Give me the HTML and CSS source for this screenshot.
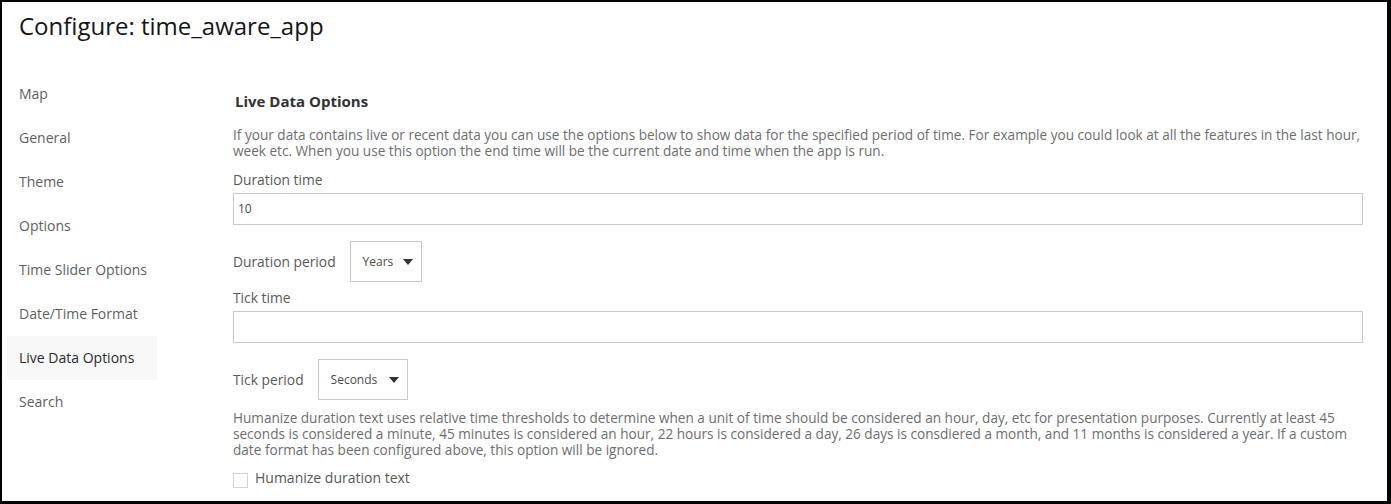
FILE: index.html
```html
<!DOCTYPE html>
<html>
<head>
<meta charset="utf-8">
<link rel="stylesheet" href="styles.css">
</head>
<body>
<div class="frame">
  <header class="header">
    <h1 class="title">Configure: time_aware_app</h1>
  </header>
  <div class="main">
    <nav class="sidebar">
      <div class="nav-item">Map</div>
      <div class="nav-item">General</div>
      <div class="nav-item">Theme</div>
      <div class="nav-item">Options</div>
      <div class="nav-item">Time Slider Options</div>
      <div class="nav-item">Date/Time Format</div>
      <div class="nav-item active">Live Data Options</div>
      <div class="nav-item">Search</div>
    </nav>
    <section class="content">
      <h2 class="section-title">Live Data Options</h2>
      <p class="desc">If your data contains live or recent data you can use the options below to show data for the specified period of time. For example you could look at all the features in the last hour, week etc. When you use this option the end time will be the current date and time when the app is run.</p>
      <div class="label label-top">Duration time</div>
      <div class="input">10</div>
      <div class="row row-duration">
        <span class="label">Duration period</span>
        <div class="select select-years"><span>Years</span><span class="caret"></span></div>
      </div>
      <div class="label label-tick">Tick time</div>
      <div class="input"></div>
      <div class="row row-tick">
        <span class="label">Tick period</span>
        <div class="select select-seconds"><span>Seconds</span><span class="caret"></span></div>
      </div>
      <p class="desc desc-human">Humanize duration text uses relative time thresholds to determine when a unit of time should be considered an hour, day, etc for presentation purposes. Currently at least 45 seconds is considered a minute, 45 minutes is considered an hour, 22 hours is considered a day, 26 days is consdiered a month, and 11 months is considered a year. If a custom date format has been configured above, this option will be ignored.</p>
      <label class="check-row"><span class="checkbox"></span><span class="check-label">Humanize duration text</span></label>
    </section>
  </div>
</div>
</body>
</html>
```

FILE: styles.css
```css
html, body {
  margin: 0;
  padding: 0;
  background: #000;
}
.frame {
  box-sizing: border-box;
  width: 1391px;
  height: 504px;
  border-style: solid;
  border-color: #000;
  border-width: 2px 4px 3px 2px;
  background: #fff;
  font-family: "Open Sans", "Noto Sans", sans-serif;
  color: #595959;
  overflow: hidden;
}
.header {
  padding: 9px 0 0 17px;
}
.title {
  margin: 0;
  font-size: 24px;
  line-height: 30px;
  font-weight: 400;
  color: #151515;
}
.main {
  display: flex;
  margin-top: 31px;
}
.sidebar {
  width: 150px;
  margin-left: 5px;
  flex: none;
}
.nav-item {
  height: 44px;
  line-height: 44px;
  padding-left: 12px;
  font-size: 14px;
  color: #5f5f5f;
}
.nav-item.active {
  background: #f8f8f8;
  color: #2b2b2b;
}
.content {
  margin-left: 76px;
  width: 1130px;
  padding-top: 19px;
}
.section-title {
  margin: 0 0 0 2px;
  font-size: 15px;
  line-height: 20px;
  font-weight: 700;
  color: #323232;
}
.desc {
  margin: 16px 0 0 0;
  font-size: 13.6px;
  line-height: 16px;
  color: #6e6e6e;
}
.label {
  font-size: 13.8px;
  line-height: 16px;
  color: #595959;
}
.label-top {
  margin-top: 13px;
}
.input {
  box-sizing: border-box;
  margin-top: 5px;
  height: 32px;
  border: 1px solid #cacaca;
  padding-left: 4px;
  font-size: 12px;
  line-height: 30px;
  color: #4c4c4c;
}
.row {
  display: flex;
  align-items: center;
  gap: 14px;
}
.row-duration {
  margin-top: 16px;
}
.row-tick {
  margin-top: 16px;
}
.label-tick {
  margin-top: 8px;
}
.select {
  box-sizing: border-box;
  height: 41px;
  border: 1px solid #cacaca;
  display: flex;
  align-items: center;
  justify-content: space-between;
  padding: 0 8px 0 12px;
  font-size: 12px;
  color: #4c4c4c;
}
.select-years {
  width: 72px;
}
.select-seconds {
  width: 90px;
}
.caret {
  width: 0;
  height: 0;
  border-left: 5px solid transparent;
  border-right: 5px solid transparent;
  border-top: 6px solid #323232;
}
.desc-human {
  margin-top: 10px;
}
.check-row {
  display: flex;
  align-items: flex-start;
  gap: 7px;
  margin-top: 15px;
}
.checkbox {
  box-sizing: border-box;
  width: 15px;
  height: 15px;
  border: 1px solid #d4d4d4;
  background: #fff;
}
.check-label {
  font-size: 14px;
  line-height: 10px;
  color: #595959;
}
```
